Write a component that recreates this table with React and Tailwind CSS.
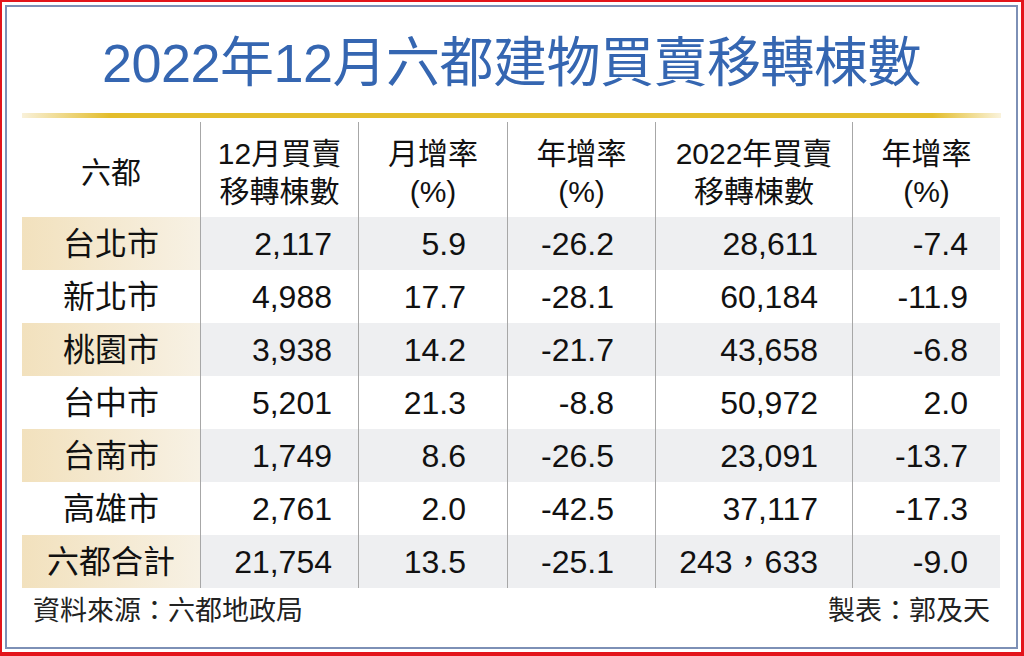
import React from 'react';

const FONT = { fontFamily: '"Liberation Sans", Arial, "Noto Sans CJK TC", sans-serif' };

const rows = [
  ['台北市', '2,117', '5.9', '-26.2', '28,611', '-7.4'],
  ['新北市', '4,988', '17.7', '-28.1', '60,184', '-11.9'],
  ['桃園市', '3,938', '14.2', '-21.7', '43,658', '-6.8'],
  ['台中市', '5,201', '21.3', '-8.8', '50,972', '2.0'],
  ['台南市', '1,749', '8.6', '-26.5', '23,091', '-13.7'],
  ['高雄市', '2,761', '2.0', '-42.5', '37,117', '-17.3'],
  ['六都合計', '21,754', '13.5', '-25.1', '243，633', '-9.0'],
];

// right padding per numeric column
const pads = ['pr-[26px]', 'pr-[41px]', 'pr-[41px]', 'pr-[34px]', 'pr-[32px]'];

const GRID = 'grid grid-cols-[178px_158px_149px_148px_197px_148px]';

const HeaderCell = ({ lines, first }) => (
  <div
    className={`flex flex-col items-center justify-center pt-[6px] text-[30px] leading-[38px] text-[#111] ${
      first ? '' : 'border-l border-[#a7a7a7]'
    }`}
  >
    {lines.map((l) => (
      <span key={l}>{l}</span>
    ))}
  </div>
);

export default function App() {
  return (
    <div
      style={FONT}
      className="w-[1024px] h-[656px] bg-white border-t-2 border-l-2 border-r-[3px] border-b-[4px] border-[#e3141b] p-[3px]"
    >
      <div className="h-full border-2 border-[#7d90b6] flex flex-col px-[15px]">
        {/* title */}
        <h1 className="mt-[29px] text-center text-[54px] leading-[54px] text-[#3566b1] tracking-[-0.5px]">
          2022年12月六都建物買賣移轉棟數
        </h1>

        {/* gold rule */}
        <div className="mt-[23px] h-[5px] bg-[linear-gradient(to_right,#f9f1da,#e3bd2b_9%,#e3bd2b_93%,#faf3dc)]" />

        {/* table */}
        <div className="mt-[4px]">
          <div className={`${GRID} h-[95px]`}>
            <HeaderCell lines={['六都']} first />
            <HeaderCell lines={['12月買賣', '移轉棟數']} />
            <HeaderCell lines={['月增率', '(%)']} />
            <HeaderCell lines={['年增率', '(%)']} />
            <HeaderCell lines={['2022年買賣', '移轉棟數']} />
            <HeaderCell lines={['年增率', '(%)']} />
          </div>

          {rows.map((r, i) => {
            const striped = i % 2 === 0;
            return (
              <div key={r[0]} className={`${GRID} h-[53px] text-[32px] text-[#111]`}>
                <div
                  className={`flex items-center justify-center ${
                    striped ? 'bg-[linear-gradient(to_right,#f2e1bd,#f7f1e4)]' : ''
                  }`}
                >
                  {r[0]}
                </div>
                {r.slice(1).map((v, j) => (
                  <div
                    key={j}
                    className={`flex items-center justify-end border-l border-[#a7a7a7] ${pads[j]} ${
                      striped ? 'bg-[#eeeff1]' : ''
                    }`}
                  >
                    {v}
                  </div>
                ))}
              </div>
            );
          })}
        </div>

        {/* footer */}
        <div className="flex justify-between px-[11px] mt-[6px] text-[27px] leading-[34px] text-[#222]">
          <span>資料來源：六都地政局</span>
          <span>製表：郭及天</span>
        </div>
      </div>
    </div>
  );
}
